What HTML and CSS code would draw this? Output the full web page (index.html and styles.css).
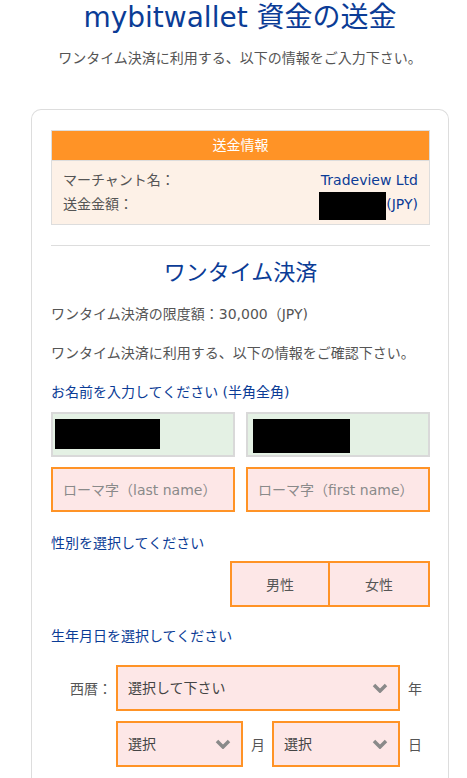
FILE: index.html
```html
<!DOCTYPE html>
<html>
<head>
  <meta charset="utf-8">
  <title>mybitwallet 資金の送金</title>
  <link rel="stylesheet" href="styles.css">
</head>
<body>

  <div class="page">
    <h1>mybitwallet 資金の送金</h1>
    <p class="lead">ワンタイム決済に利用する、以下の情報をご入力下さい。</p>

    <div class="card">
      <div class="info">
        <div class="info-head">送金情報</div>
        <div class="info-body">
          <div class="info-row">
            <span>マーチャント名：</span>
            <span class="info-value">Tradeview Ltd</span>
          </div>
          <div class="info-row">
            <span>送金金額：</span>
            <span class="info-value"><span class="redact amount"></span>(JPY)</span>
          </div>
        </div>
      </div>

      <hr class="divider">

      <h2>ワンタイム決済</h2>
      <p class="note first">ワンタイム決済の限度額：30,000（JPY)</p>
      <p class="note">ワンタイム決済に利用する、以下の情報をご確認下さい。</p>

      <p class="label">お名前を入力してください (半角全角)</p>
      <div class="pair">
        <div class="field filled"><span class="redact name1"></span></div>
        <div class="field filled"><span class="redact name2"></span></div>
      </div>
      <div class="pair">
        <input class="field empty" type="text" placeholder="ローマ字（last name）">
        <input class="field empty" type="text" placeholder="ローマ字（first name）">
      </div>

      <p class="label gap">性別を選択してください</p>
      <div class="gender">
        <button class="gender-btn">男性</button>
        <button class="gender-btn">女性</button>
      </div>

      <p class="label gap2">生年月日を選択してください</p>
      <div class="dob-row first-row">
        <span class="dob-label">西暦：</span>
        <div class="pick year">
          <select><option>選択して下さい</option></select>
          <svg width="16" height="10" viewBox="0 0 16 10"><path d="M2 2 L8 8 L14 2" fill="none" stroke="#8a8a8a" stroke-width="3.5"/></svg>
        </div>
        <span class="unit">年</span>
      </div>
      <div class="dob-row">
        <span class="dob-label"></span>
        <div class="pick month">
          <select><option>選択</option></select>
          <svg width="16" height="10" viewBox="0 0 16 10"><path d="M2 2 L8 8 L14 2" fill="none" stroke="#8a8a8a" stroke-width="3.5"/></svg>
        </div>
        <span class="unit">月</span>
        <div class="pick day">
          <select><option>選択</option></select>
          <svg width="16" height="10" viewBox="0 0 16 10"><path d="M2 2 L8 8 L14 2" fill="none" stroke="#8a8a8a" stroke-width="3.5"/></svg>
        </div>
        <span class="unit">日</span>
      </div>
    </div>
  </div>

</body>
</html>
```

FILE: styles.css
```css
body {
  margin: 0;
  font-family: "DejaVu Sans", "Noto Sans CJK JP", sans-serif;
  font-size: 14px;
  color: #555;
  background: #fff;
}
.page {
  width: 418px;
  margin-left: 31px;
}
h1 {
  margin: 0;
  font-size: 28px;
  font-weight: normal;
  line-height: 36px;
  color: #0b3c96;
  text-align: center;
  white-space: nowrap;
}
.lead {
  margin: 12px 0 0;
  line-height: 20px;
  text-align: center;
  white-space: nowrap;
}
.card {
  margin-top: 41px;
  border: 1px solid #ddd;
  border-bottom: none;
  border-radius: 10px 10px 0 0;
  padding: 20px 18px 14px 19px;
}
.info {
  border: 1px solid #ddd;
}
.info-head {
  background: #ff9326;
  color: #fff;
  text-align: center;
  line-height: 29px;
}
.info-body {
  background: #fdf1e7;
  border-top: 1px solid #ddd;
  padding: 7px 11px 8px 11px;
  line-height: 24px;
}
.info-row {
  display: flex;
  justify-content: space-between;
  align-items: center;
  height: 24px;
}
.info-value {
  color: #0b3c96;
  display: flex;
  align-items: center;
}
.redact {
  display: inline-block;
  background: #000;
}
.amount {
  width: 67px;
  height: 28px;
  margin-top: 3px;
}
.divider {
  border: none;
  border-top: 1px solid #ddd;
  margin: 20px 0 0;
}
h2 {
  margin: 12px 0 0;
  font-size: 22px;
  font-weight: normal;
  line-height: 30px;
  color: #0b3c96;
  text-align: center;
}
.note {
  margin: 19px 0 0;
  line-height: 20px;
  white-space: nowrap;
}
.note.first {
  margin-top: 16px;
}
.label {
  margin: 19px 0 0;
  line-height: 20px;
  color: #0b3c96;
}
.label.gap {
  margin-top: 21px;
}
.label.gap2 {
  margin-top: 19px;
}
.pair {
  display: grid;
  grid-template-columns: 1fr 1fr;
  gap: 11px;
  margin-top: 10px;
}
.field {
  box-sizing: border-box;
  height: 45px;
  margin: 0;
  font: inherit;
  width: 100%;
}
.filled {
  background: #e4f1e4;
  border: 2px solid #d9d9d9;
  padding: 5px 2px;
}
.name1 {
  width: 105px;
  height: 30px;
}
.name2 {
  width: 97px;
  height: 34px;
  margin-left: 3px;
}
.empty {
  background: #fde7e7;
  border: 2px solid #ff9326;
  padding: 0 10px;
  color: #555;
  outline: none;
}
.empty::placeholder {
  color: #8a8a8a;
}
.gender {
  display: flex;
  justify-content: flex-end;
  margin-top: 8px;
}
.gender-btn {
  width: 100px;
  height: 46px;
  background: #fde7e7;
  border: 2px solid #ff9326;
  font: inherit;
  color: #555;
  padding: 0;
}
.gender-btn + .gender-btn {
  margin-left: -2px;
  width: 102px;
}
.dob-row {
  display: flex;
  align-items: center;
  margin-top: 10px;
}
.dob-row.first-row {
  margin-top: 19px;
}
.dob-label {
  width: 61px;
  margin-right: 4px;
  text-align: right;
  white-space: nowrap;
}
.pick {
  box-sizing: border-box;
  display: flex;
  align-items: center;
  height: 46px;
  background: #fde7e7;
  border: 2px solid #ff9326;
  padding-right: 10px;
}
.pick select {
  flex: 1;
  appearance: none;
  -webkit-appearance: none;
  border: none;
  background: transparent;
  font: inherit;
  color: #444;
  padding: 0 10px;
  height: 100%;
  outline: none;
}
.year {
  width: 284px;
}
.month {
  width: 127px;
}
.day {
  width: 128px;
  margin-left: 7px;
}
.unit {
  margin-left: 8px;
}
```
